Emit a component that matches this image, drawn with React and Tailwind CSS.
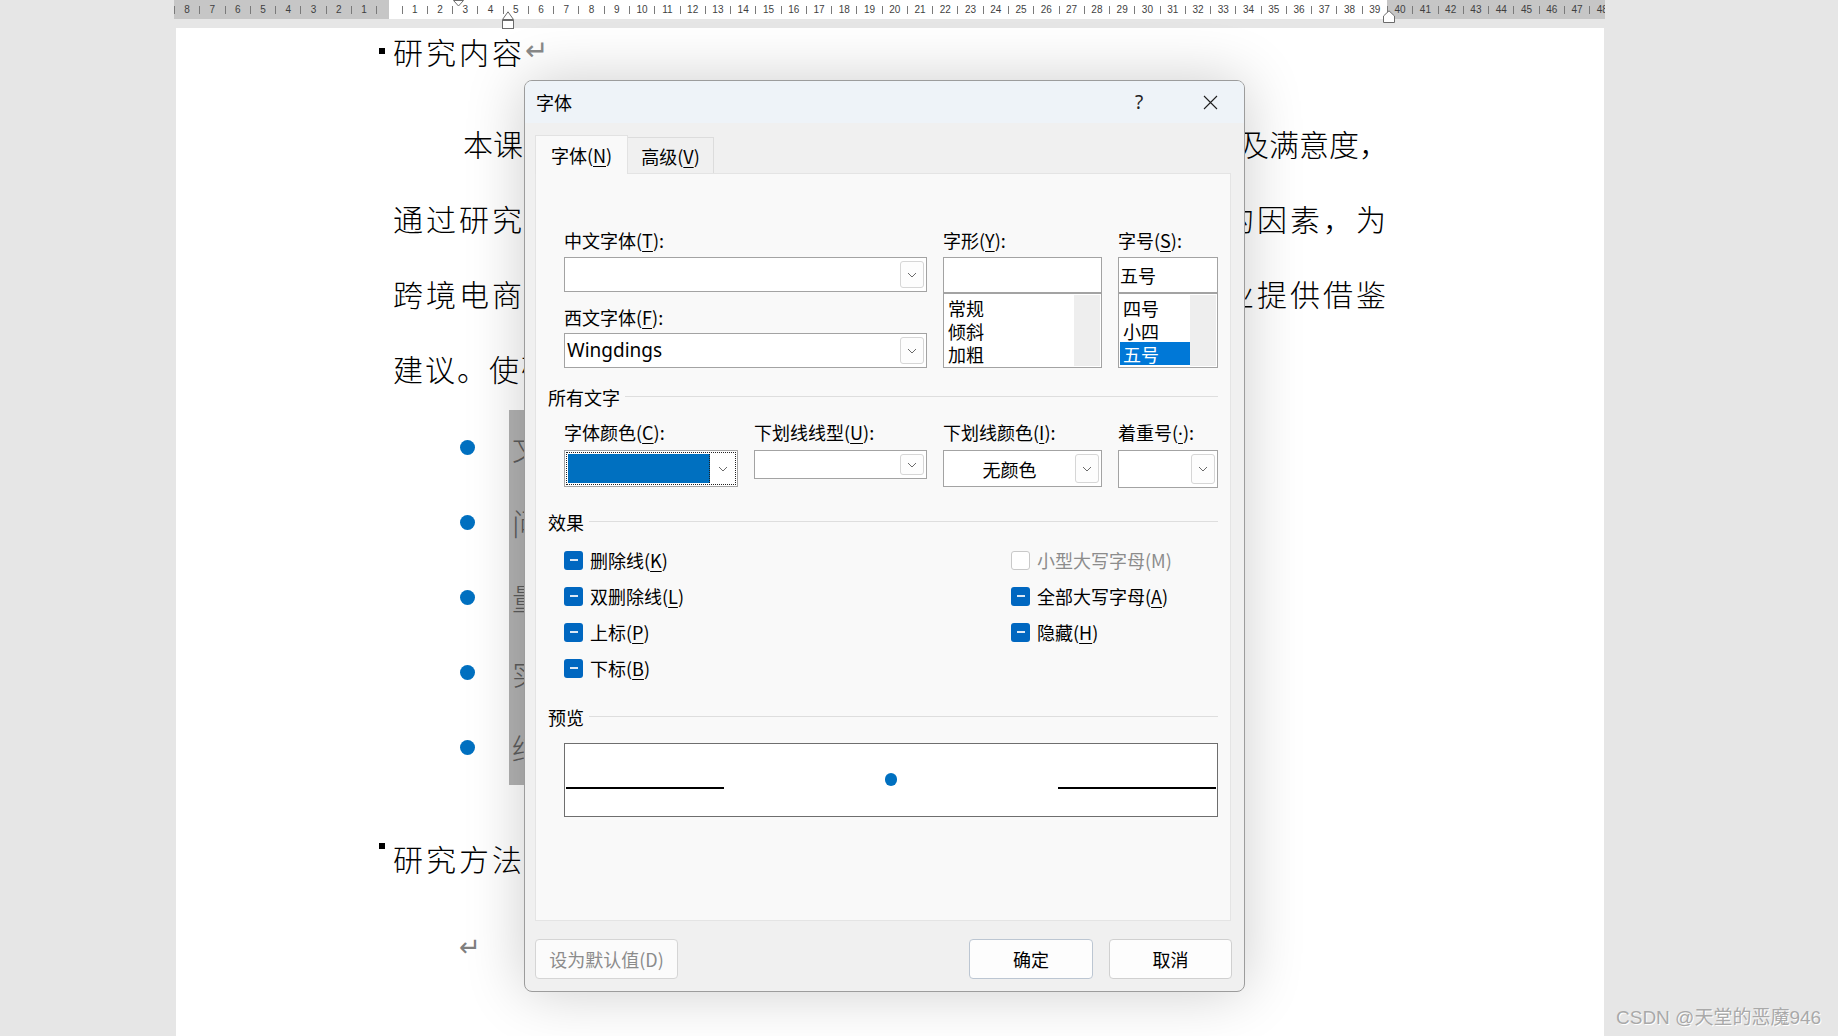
import React from "react";

const RULER_LEFT = [8, 7, 6, 5, 4, 3, 2, 1];
const RULER_MID = Array.from({ length: 39 }, (_, i) => i + 1);
const RULER_RIGHT = [40, 41, 42, 43, 44, 45, 46, 47, 48];

function RCell({ n }) {
  return (
    <div className="w-[25.27px] shrink-0 flex items-center h-full">
      <div className="w-px h-[8px] bg-[#7a7a7a] shrink-0" />
      <div className="flex-1 text-center text-[10px] leading-none text-[#3f3f3f]">{n}</div>
    </div>
  );
}

function Ruler() {
  return (
    <div className="relative h-[19px] flex font-['Liberation_Sans_Narrow','Liberation_Sans',sans-serif]">
      <div className="w-[174px] shrink-0" />
      <div className="w-[215px] shrink-0 flex bg-[#c6c6c6]">
        {RULER_LEFT.map((n) => (
          <RCell key={n} n={n} />
        ))}
        <div className="w-[12.6px] shrink-0 flex items-center">
          <div className="w-px h-[8px] bg-[#7a7a7a]" />
        </div>
      </div>
      <div className="w-[998px] shrink-0 flex bg-white">
        <div className="w-[12.6px] shrink-0" />
        {RULER_MID.map((n) => (
          <RCell key={n} n={n} />
        ))}
      </div>
      <div className="w-[218px] shrink-0 flex bg-[#c6c6c6] overflow-hidden">
        {RULER_RIGHT.map((n) => (
          <RCell key={n} n={n} />
        ))}
      </div>

      {/* indent markers */}
      <svg className="absolute left-[453px] top-0" width="11" height="7" viewBox="0 0 11 7">
        <path d="M0.5 0.5 H10.5 L5.5 6 Z" fill="#fff" stroke="#6b6b6b" />
      </svg>
      <svg className="absolute left-[502px] top-[11px]" width="12" height="18" viewBox="0 0 12 18">
        <path d="M0.5 8.5 L6 0.8 L11.5 8.5 Z" fill="#fff" stroke="#6b6b6b" />
        <rect x="0.5" y="9.5" width="11" height="8" fill="#fff" stroke="#6b6b6b" />
      </svg>
      <svg className="absolute left-[1383px] top-[10px]" width="12" height="13" viewBox="0 0 12 13">
        <path d="M0.5 12.5 V6 L6 0.8 L11.5 6 V12.5 Z" fill="#fff" stroke="#6b6b6b" />
      </svg>
    </div>
  );
}

function DocLine({ left, right, track = "tracking-[3px]" }) {
  return (
    <div className={`h-[75px] flex items-center justify-between whitespace-nowrap ${track}`}>
      <span>{left}</span>
      <span>{right}</span>
    </div>
  );
}

const BULLETS = [
  "文献研究法：梳理国内外相关研究成果",
  "问卷调查法：收集跨境电商消费者数据",
  "量化分析法：对调查数据进行统计分析",
  "实证研究法：检验影响因素的作用路径",
  "结论与建议：提出针对性的改进措施",
];

function Document() {
  return (
    <div className="ml-[203px] w-[1010px] text-[30px] tracking-[2px] text-black font-light">
      <div className="h-[46px] flex items-center tracking-[3px]">
        <div className="w-[6px] h-[6px] bg-black shrink-0" />
        <span className="ml-[8px]">研究内容</span>
        <span className="text-[#8a8a8a] text-[28px] tracking-normal font-['DejaVu_Sans',sans-serif]">↵</span>
      </div>

      <div className="mt-[32px] ml-[14px] w-[996px]">
        <div className="pl-[70px]">
          <DocLine track="tracking-[0px]" left="本课题旨在研究跨境电商消费者购买" right="及满意度，" />
        </div>
        <DocLine left="通过研究分析影响消费者购买决策" right="的因素，为" />
        <DocLine left="跨境电商平台的运营优化与相关企" right="业提供借鉴" />
        <DocLine track="tracking-[2px]" left="建议。使研究成果具有实际应用价值。" right="" />

        <div className="mt-[4px]">
          {BULLETS.map((b) => (
            <div key={b} className="h-[75px] flex items-center whitespace-nowrap">
              <div className="ml-[67px] w-[15px] h-[15px] rounded-full bg-[#0070c0] shrink-0" />
              <div className="ml-[34px] self-stretch flex items-center bg-[#b3b3b3] pl-[3px] pr-[10px] text-[#5c5c5c]">
                {b}
              </div>
            </div>
          ))}
        </div>
      </div>

      <div className="mt-[50px] h-[46px] flex items-center tracking-[3px]">
        <div className="w-[6px] h-[6px] bg-black shrink-0 self-start mt-[8px]" />
        <span className="ml-[8px]">研究方法</span>
      </div>

      <div className="mt-[46px] h-[40px] flex items-center">
        <span className="ml-[80px] text-[#7f7f7f] text-[26px] tracking-normal font-['DejaVu_Sans',sans-serif]">↵</span>
      </div>
    </div>
  );
}

function L({ t, k, tail = "", cls = "", kcls = "" }) {
  return (
    <span className={cls}>
      {t}(<span className={`underline underline-offset-[3px] decoration-1 ${kcls}`}>{k}</span>){tail}
    </span>
  );
}

function Chevron() {
  return (
    <svg width="10" height="6" viewBox="0 0 10 6">
      <path d="M1 1 L5 5 L9 1" fill="none" stroke="#6a6a6a" strokeWidth="1" />
    </svg>
  );
}

function DropBtn() {
  return (
    <div className="w-[24px] my-[3px] mr-[2px] shrink-0 rounded-[3px] border border-[#d6d6d6] bg-[#fdfdfd] flex items-center justify-center">
      <Chevron />
    </div>
  );
}

function Combo({ h = "h-[35px]", children, center = false }) {
  return (
    <div className={`${h} w-full border border-[#a3a3a3] bg-white flex`}>
      <div className={`flex-1 flex items-center px-[2px] ${center ? "justify-center" : ""}`}>{children}</div>
      <DropBtn />
    </div>
  );
}

function ListBox({ items, selected }) {
  return (
    <div className="h-[75px] w-full border border-[#a3a3a3] bg-white flex">
      <div className="flex-1 pt-[2px] pl-px">
        {items.map((it) => (
          <div
            key={it}
            className={`h-[23px] flex items-center pl-[3px] leading-none ${
              it === selected ? "bg-[#0078d7] text-white" : ""
            }`}
          >
            {it}
          </div>
        ))}
      </div>
      <div className="w-[26px] my-px mr-px bg-[#eeeeee] shrink-0" />
    </div>
  );
}

function Section({ title, className = "" }) {
  return (
    <div className={`h-[20px] flex items-center ${className}`}>
      <span className="leading-[20px]">{title}</span>
      <div className="flex-1 h-px bg-[#dedede] ml-[5px] -mt-[2px]" />
    </div>
  );
}

function Check({ on = true, children, disabled = false }) {
  return (
    <div className="h-[36px] flex items-center">
      {on ? (
        <div className="w-[19px] h-[19px] rounded-[3px] bg-[#0067c0] flex items-center justify-center shrink-0">
          <div className="w-[8px] h-[2px] bg-[#dce8f5]" />
        </div>
      ) : (
        <div className="w-[19px] h-[19px] rounded-[3px] border border-[#c9c9c9] bg-white shrink-0" />
      )}
      <span className={`ml-[7px] ${disabled ? "text-[#8c8c8c]" : ""}`}>{children}</span>
    </div>
  );
}

function Dialog() {
  return (
    <div className="absolute left-[524px] top-[80px] w-[721px] h-[912px] rounded-[8px] border border-[#9c9c9c] bg-[#f0f0f0] shadow-[0_0_60px_rgba(0,0,0,0.2)] overflow-hidden flex flex-col text-[18px] leading-[20px] text-black">
      <div className="h-[42px] shrink-0 bg-[#eef3f8] flex items-center pl-[11px] pr-[14px]">
        <span>字体</span>
        <div className="flex-1" />
        <div className="w-[40px] text-center text-[19px] text-[#222] font-['Noto_Sans',sans-serif]">?</div>
        <div className="w-[40px] ml-[31px] flex items-center justify-center">
          <svg width="15" height="15" viewBox="0 0 15 15">
            <path d="M1 1 L14 14 M14 1 L1 14" stroke="#1f1f1f" strokeWidth="1.1" />
          </svg>
        </div>
      </div>

      {/* tabs */}
      <div className="mt-[12px] pl-[10px] flex items-end h-[38px] shrink-0">
        <div className="relative z-10 -mb-px w-[93px] h-[39px] bg-[#f9f9f9] border border-b-0 border-[#e2e2e2] flex items-center justify-center">
          <L t="字体" k="N" />
        </div>
        <div className="w-[86px] h-[36px] bg-[#f0f0f0] border-t border-r border-[#dcdcdc] flex items-center justify-center">
          <L t="高级" k="V" />
        </div>
      </div>

      {/* panel */}
      <div className="ml-[10px] w-[696px] h-[748px] shrink-0 bg-[#f9f9f9] border border-[#e4e4e4] px-[12px] pt-[56px]">
        <div className="ml-[16px] flex gap-[16px]">
          <div className="w-[363px]">
            <L t="中文字体" k="T" tail=":" cls="block h-[20px]" />
            <div className="mt-[7px]">
              <Combo />
            </div>
            <L t="西文字体" k="F" tail=":" cls="block h-[20px] mt-[15px]" />
            <div className="mt-[6px]">
              <Combo>
                <span className="font-['Noto_Sans',sans-serif] text-[19px] leading-none">Wingdings</span>
              </Combo>
            </div>
          </div>
          <div className="w-[159px]">
            <L t="字形" k="Y" tail=":" cls="block h-[20px]" />
            <div className="mt-[7px] h-[36px] border border-[#a3a3a3] bg-white" />
            <ListBox items={["常规", "倾斜", "加粗"]} />
          </div>
          <div className="w-[100px]">
            <L t="字号" k="S" tail=":" cls="block h-[20px]" />
            <div className="mt-[7px] h-[36px] border border-[#a3a3a3] bg-white flex items-center pl-[1px]">五号</div>
            <ListBox items={["四号", "小四", "五号"]} selected="五号" />
          </div>
        </div>

        <Section title="所有文字" className="mt-[19px]" />

        <div className="mt-[15px] ml-[16px] flex gap-[16px]">
          <div className="w-[174px]">
            <L t="字体颜色" k="C" tail=":" cls="block h-[20px]" />
            <div className="mt-[8px] h-[37px] border border-[#a3a3a3] bg-white p-px">
              <div className="h-full border border-dotted border-[#222] flex">
                <div className="w-[142px] m-[1px] bg-[#0070c0] border-r border-dotted border-[#222]" />
                <div className="flex-1 flex items-center justify-center">
                  <Chevron />
                </div>
              </div>
            </div>
          </div>
          <div className="w-[173px]">
            <L t="下划线线型" k="U" tail=":" cls="block h-[20px]" />
            <div className="mt-[8px]">
              <Combo h="h-[29px]" />
            </div>
          </div>
          <div className="w-[159px]">
            <L t="下划线颜色" k="I" tail=":" cls="block h-[20px]" />
            <div className="mt-[8px]">
              <Combo h="h-[37px]" center>
                <span>无颜色</span>
              </Combo>
            </div>
          </div>
          <div className="w-[100px]">
            <L t="着重号" k="·" tail=":" cls="block h-[20px]" kcls="font-['Noto_Sans',sans-serif]" />
            <div className="mt-[8px]">
              <Combo h="h-[38px]" />
            </div>
          </div>
        </div>

        <Section title="效果" className="mt-[24px]" />

        <div className="mt-[10px] ml-[16px] grid grid-cols-[447px_1fr]">
          <Check>
            <L t="删除线" k="K" />
          </Check>
          <Check on={false} disabled>
            小型大写字母(M)
          </Check>
          <Check>
            <L t="双删除线" k="L" />
          </Check>
          <Check>
            <L t="全部大写字母" k="A" />
          </Check>
          <Check>
            <L t="上标" k="P" />
          </Check>
          <Check>
            <L t="隐藏" k="H" />
          </Check>
          <Check>
            <L t="下标" k="B" />
          </Check>
          <div />
        </div>

        <Section title="预览" className="mt-[21px]" />

        <div className="mt-[16px] ml-[16px] h-[74px] border border-[#6e6e6e] bg-white pt-[29px] px-[1px]">
          <div className="flex justify-center">
            <div className="w-[12px] h-[13px] rounded-full bg-[#0070c0]" />
          </div>
          <div className="mt-[1px] flex justify-between">
            <div className="w-[158px] h-[2px] bg-black" />
            <div className="w-[158px] h-[2px] bg-black" />
          </div>
        </div>
      </div>

      {/* buttons */}
      <div className="mt-[18px] pl-[10px] pr-[12px] flex">
        <div className="w-[143px] h-[40px] rounded-[4px] border border-[#d5d5d5] bg-[#fbfbfb] flex items-center justify-center text-[#8b8b8b]">
          设为默认值(D)
        </div>
        <div className="flex-1" />
        <div className="w-[124px] h-[40px] rounded-[4px] border border-[#bcc6d2] bg-[#fdfdfd] flex items-center justify-center">
          确定
        </div>
        <div className="w-[123px] h-[40px] ml-[16px] rounded-[4px] border border-[#d0d0d0] bg-[#fdfdfd] flex items-center justify-center">
          取消
        </div>
      </div>
    </div>
  );
}

export default function App() {
  return (
    <div className="relative w-[1838px] h-[1036px] overflow-hidden bg-[#e6e6e6] font-['Noto_Sans_CJK_SC',sans-serif]">
      <Ruler />
      <div className="ml-[176px] mt-[9px] w-[1428px] h-[1010px] bg-white pt-0">
        <Document />
      </div>
      <Dialog />
      <div className="absolute left-[1616px] top-[1005px] text-[19px] leading-[26px] text-[#a9a9a9] font-['Liberation_Sans','Noto_Sans_CJK_SC',sans-serif] [text-shadow:1px_1px_0_#ffffff]">
        CSDN @天堂的恶魔946
      </div>
    </div>
  );
}
